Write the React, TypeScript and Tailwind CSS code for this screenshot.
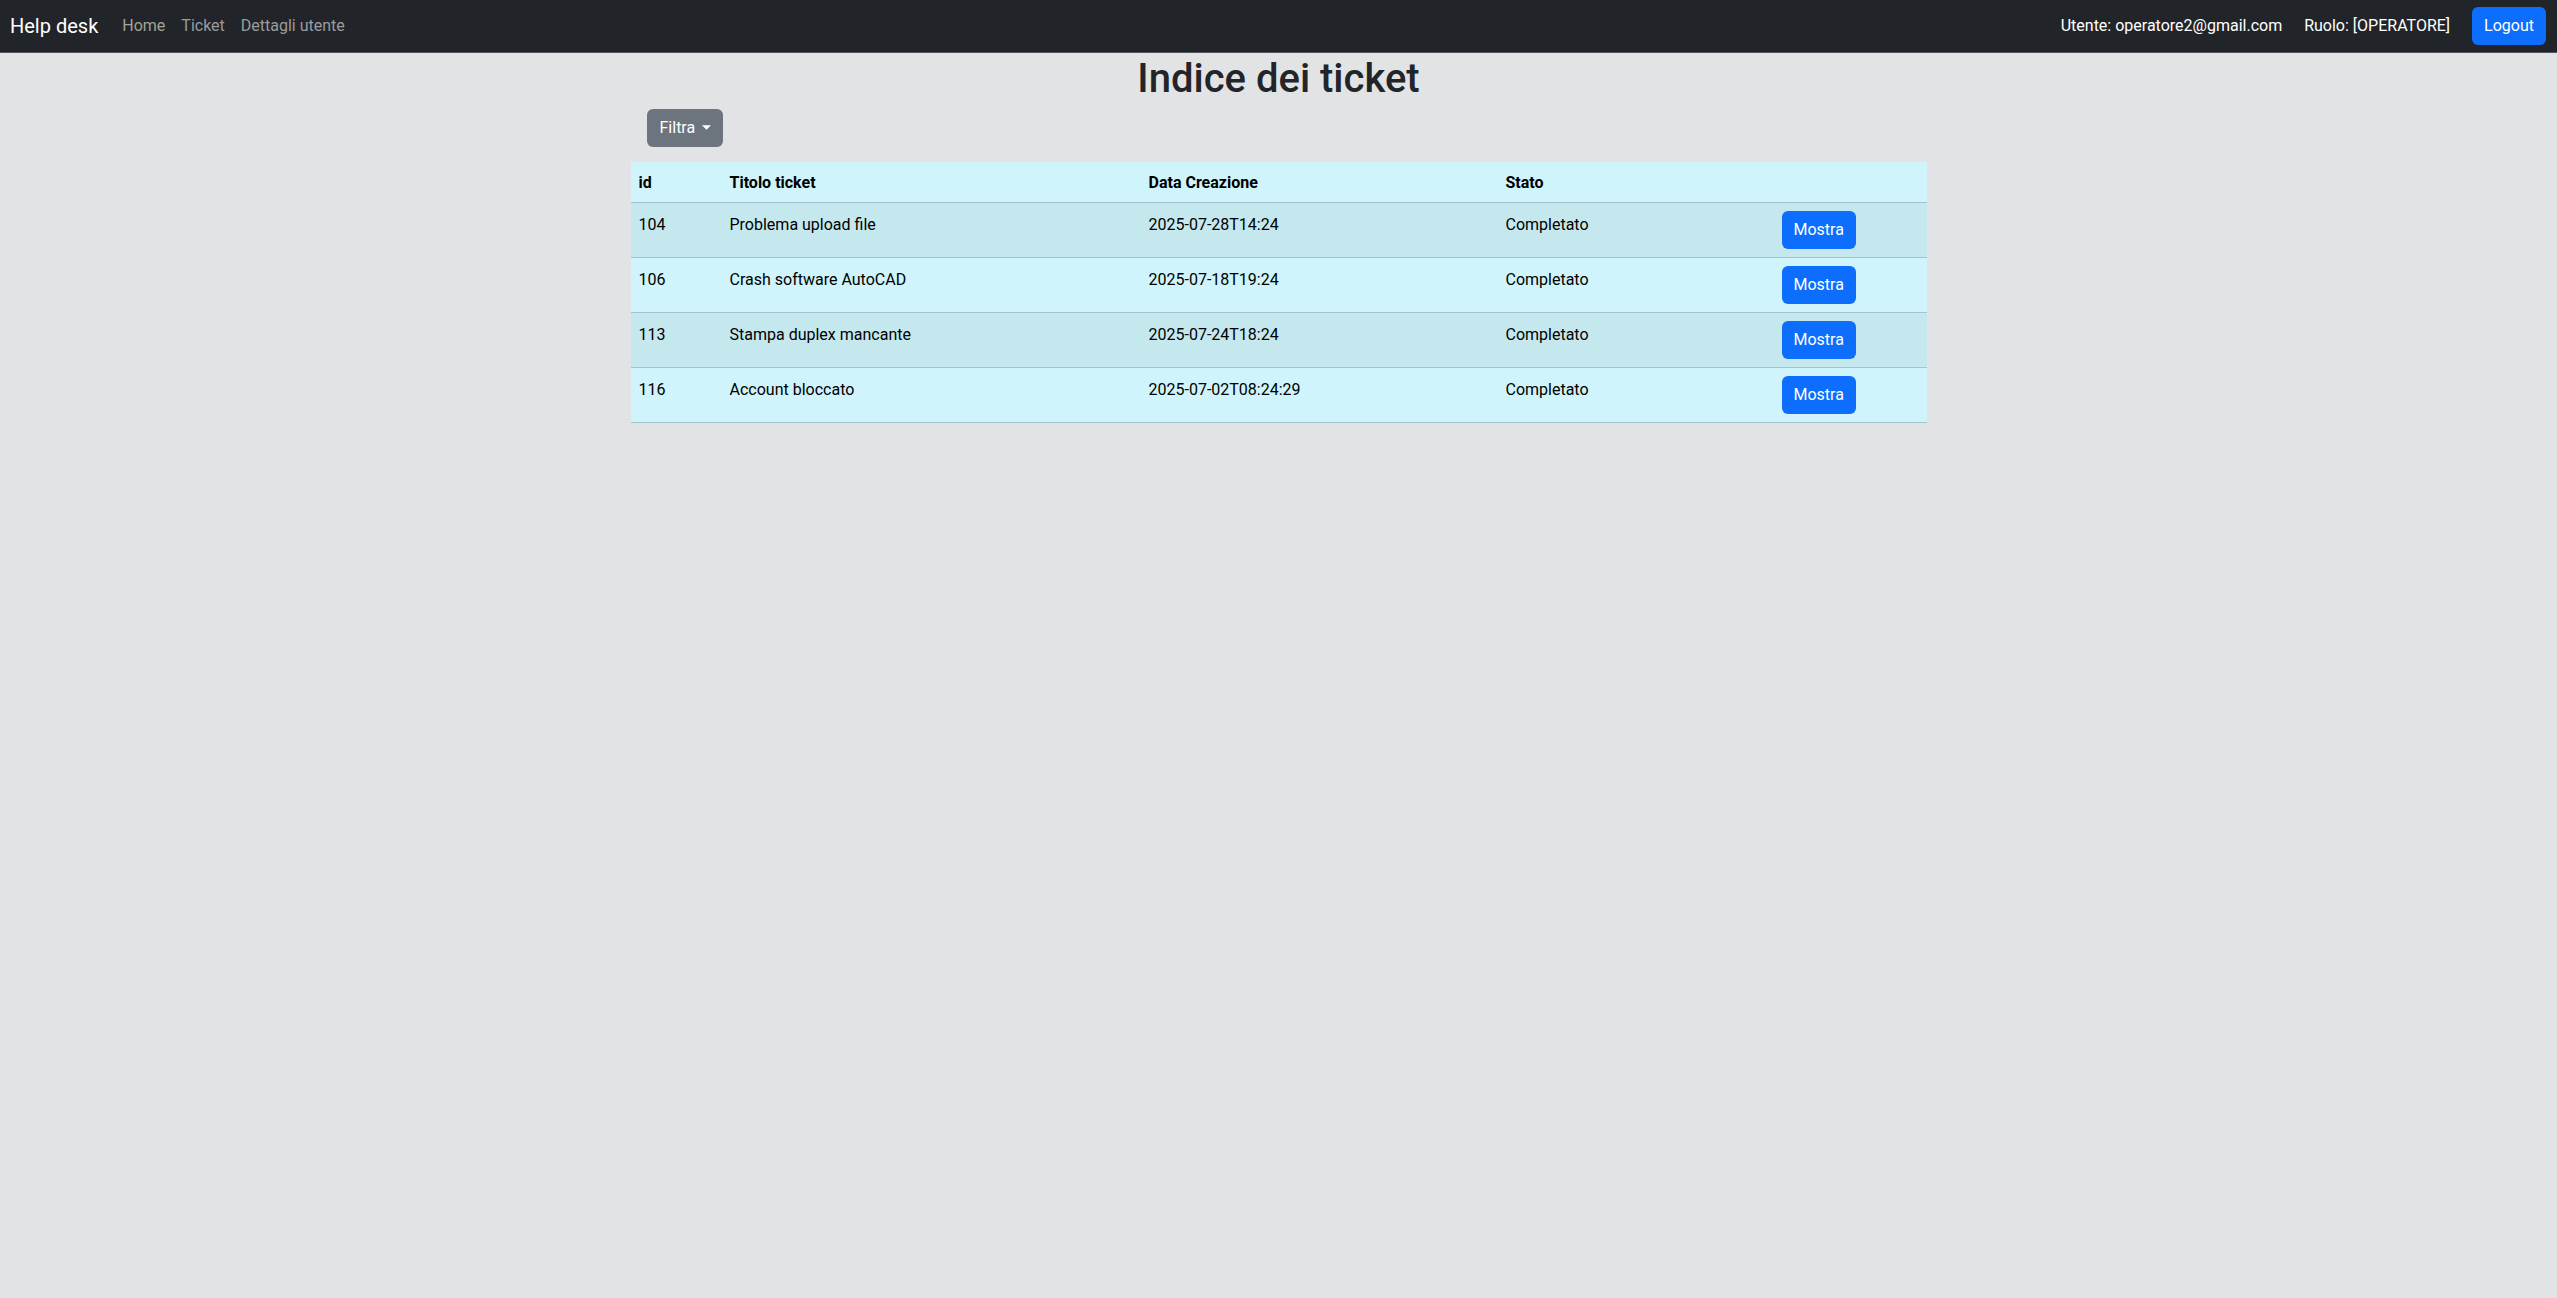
import React from "react";

const FONT = 'Roboto, "Noto Sans", Arial, sans-serif';

type Row = { id: number; title: string; date: string; state: string };
const rows: Row[] = [
  { id: 104, title: "Problema upload file", date: "2025-07-28T14:24", state: "Completato" },
  { id: 106, title: "Crash software AutoCAD", date: "2025-07-18T19:24", state: "Completato" },
  { id: 113, title: "Stampa duplex mancante", date: "2025-07-24T18:24", state: "Completato" },
  { id: 116, title: "Account bloccato", date: "2025-07-02T08:24:29", state: "Completato" },
];

export default function App() {
  return (
    <div className="min-h-screen bg-[#e2e3e5] text-[16px] leading-[24px]" style={{ fontFamily: FONT }}>
      <nav className="h-[53px] bg-[#212529] border-b border-[#50555b] flex items-center pl-[10px] pr-[11px]">
        <span className="text-white text-[20px] leading-[30px] mr-[24px]">Help desk</span>
        <div className="flex items-center gap-[16px]">
          <a className="text-[#a3a396]">Home</a>
          <a className="text-[#9a9c9f]">Ticket</a>
          <a className="text-[#9a9c9f]">Dettagli utente</a>
        </div>
        <div className="ml-auto flex items-center">
          <span className="text-white">Utente: operatore2@gmail.com</span>
          <span className="text-white ml-[22px]">Ruolo: [OPERATORE]</span>
          <button className="ml-[22px] h-[38px] px-[12px] rounded-[6px] bg-[#0d6efd] text-white">Logout</button>
        </div>
      </nav>
      <div className="w-[1296px] mx-auto">
        <h1 className="pt-[3px] text-center text-[40px] leading-[45px] font-medium text-[#212529]">Indice dei ticket</h1>
        <div className="mt-[8px] ml-[16px]">
          <button className="h-[38px] pl-[13px] pr-[12px] rounded-[6px] bg-[#6c757d] text-white inline-flex items-center">
            Filtra
            <svg width="9" height="5" viewBox="0 0 10 5" className="ml-[7px] mt-[-1px]">
              <path d="M0 0 L10 0 L5 5 Z" fill="white" />
            </svg>
          </button>
        </div>
        <table className="mt-[15px] w-full border-collapse text-black">
          <thead>
            <tr className="bg-[#cff4fc] border-b border-[#a6c3ca]">
              <th className="w-[91px] px-[8px] pt-[9px] pb-[7px] text-left font-bold align-top">id</th>
              <th className="w-[419px] px-[8px] pt-[9px] pb-[7px] text-left font-bold align-top">Titolo ticket</th>
              <th className="w-[357px] px-[8px] pt-[9px] pb-[7px] text-left font-bold align-top">Data Creazione</th>
              <th className="w-[276px] px-[8px] pt-[9px] pb-[7px] text-left font-bold align-top">Stato</th>
              <th className="w-[153px] px-[8px] pt-[9px] pb-[7px]"></th>
            </tr>
          </thead>
          <tbody>
            {rows.map((r, i) => (
              <tr key={r.id} className={(i % 2 === 0 ? "bg-[#c5e8ef]" : "bg-[#cff4fc]") + " border-b border-[#a6c3ca]"}>
                <td className="px-[8px] pt-[10px] align-top">{r.id}</td>
                <td className="px-[8px] pt-[10px] align-top">{r.title}</td>
                <td className="px-[8px] pt-[10px] align-top">{r.date}</td>
                <td className="px-[8px] pt-[10px] align-top">{r.state}</td>
                <td className="p-[8px] align-top">
                  <button className="h-[38px] px-[12px] rounded-[6px] bg-[#0d6efd] text-white">Mostra</button>
                </td>
              </tr>
            ))}
          </tbody>
        </table>
      </div>
    </div>
  );
}
